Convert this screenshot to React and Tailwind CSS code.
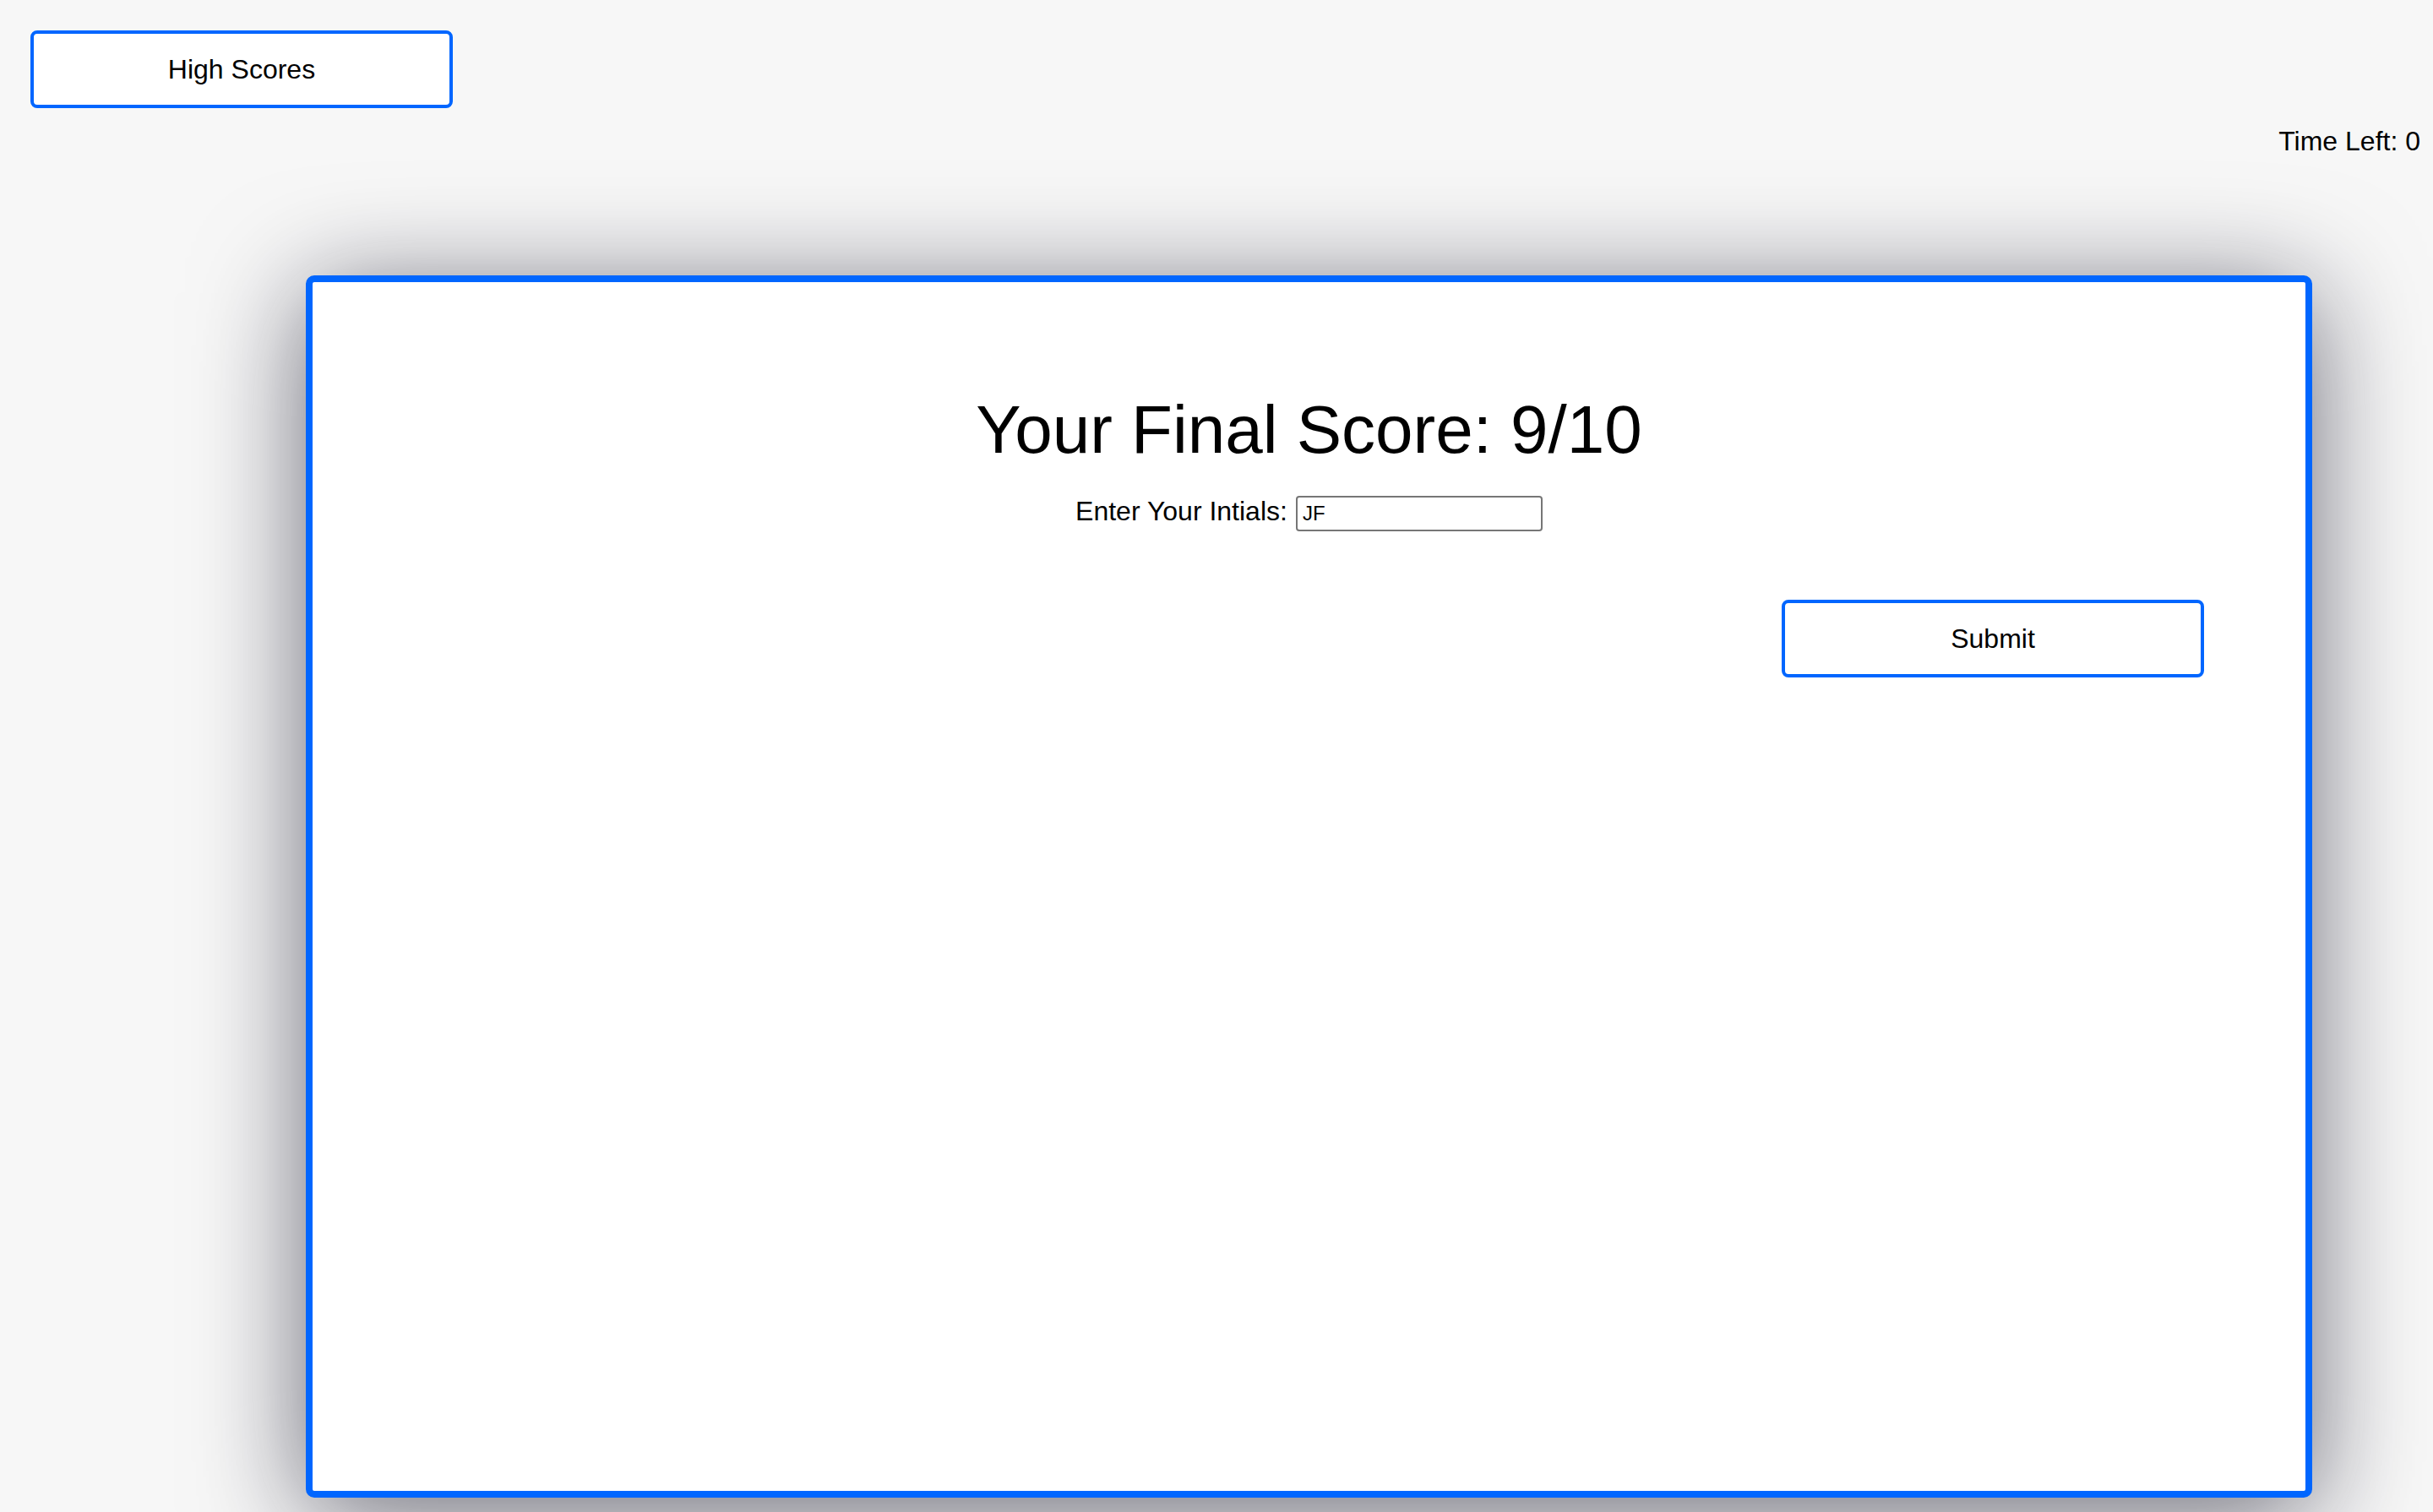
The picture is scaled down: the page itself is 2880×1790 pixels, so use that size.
export default function App() {
  return (
    <div className="min-h-screen bg-[#f7f7f7] text-black font-['Liberation_Sans',Arial,sans-serif]">
      {/* Top bar */}
      <div className="pt-[36px] pl-[36px]">
        <button className="w-[500px] h-[92px] bg-white border-4 border-[#0066ff] rounded-[8px] text-[32px] leading-[37px]">
          High Scores
        </button>
      </div>
      <div className="mt-[21px] pr-[15px] flex justify-end text-[32px] leading-[37px]">
        Time Left: 0
      </div>

      {/* Quiz card */}
      <div className="mt-[140px] ml-[362px] w-[2375px] h-[1447px] bg-white border-8 border-[#0066ff] rounded-[10px] shadow-[0_20px_130px_rgba(10,10,30,0.6)]">
        <h1 className="pt-[129px] text-center text-[80px] leading-[92px]">
          Your Final Score: 9/10
        </h1>
        <div className="mt-[32px] flex justify-center items-start gap-[10px]">
          <label className="text-[32px] leading-[37px]">Enter Your Intials:</label>
          <input
            type="text"
            defaultValue="JF"
            className="w-[292px] h-[42px] px-[6px] border-2 border-[#767676] rounded-[4px] text-[24px] font-['Liberation_Sans',Arial,sans-serif] outline-none"
          />
        </div>
        <div className="mt-[81px] pr-[120px] flex justify-end">
          <button className="w-[500px] h-[92px] bg-white border-4 border-[#0066ff] rounded-[8px] text-[32px] leading-[37px]">
            Submit
          </button>
        </div>
      </div>
    </div>
  );
}
